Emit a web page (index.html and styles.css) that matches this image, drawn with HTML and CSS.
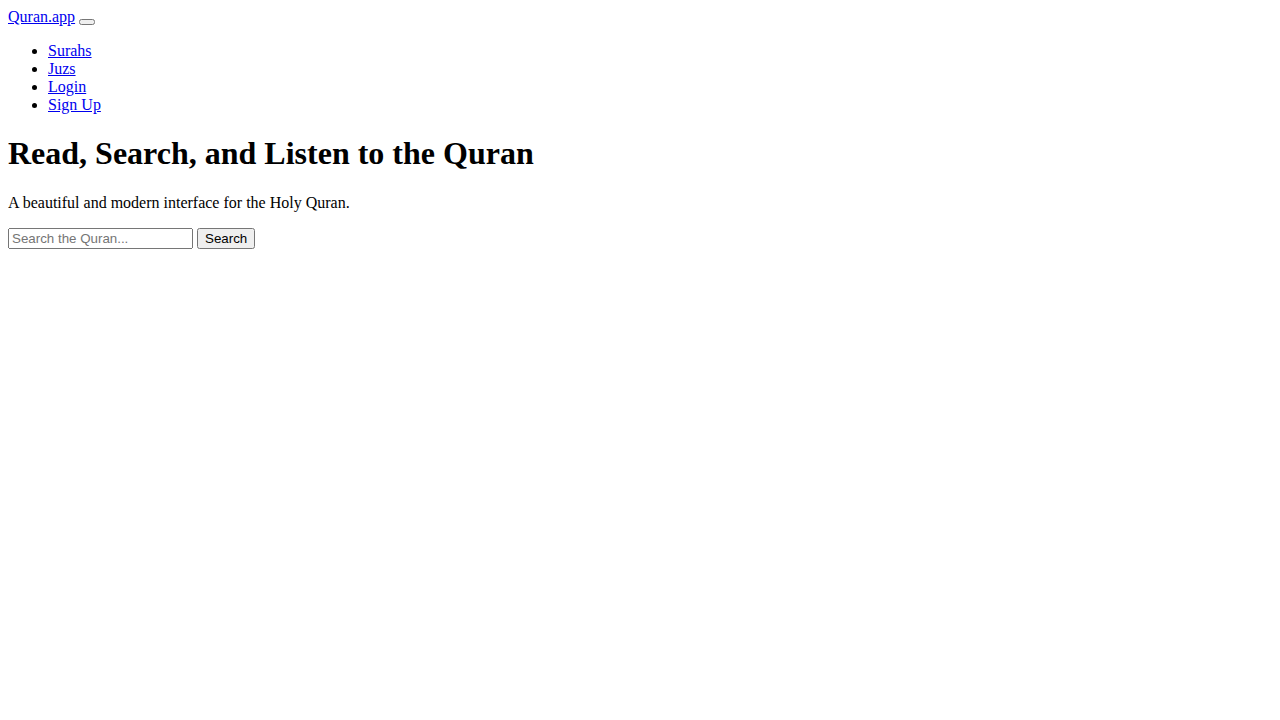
FILE: index.html
```html
<!DOCTYPE html>
<html lang="en">
<head>
<meta charset="utf-8">
<title>Quran.app</title>
<link rel="stylesheet" href="styles.css">
</head>
<body>
<nav class="site-nav">
  <div class="nav-top">
    <a href="#" class="brand">Quran.app</a>
    <button class="nav-toggle" type="button"></button>
  </div>
  <ul class="nav-links">
    <li><a href="#">Surahs</a></li>
    <li><a href="#">Juzs</a></li>
    <li><a href="#">Login</a></li>
    <li><a href="#">Sign Up</a></li>
  </ul>
</nav>
<main class="hero">
  <h1 class="hero-title">Read, Search, and Listen to the Quran</h1>
  <p class="hero-text">A beautiful and modern interface for the Holy Quran.</p>
  <form class="search-form">
    <input class="search-input" type="text" placeholder="Search the Quran...">
    <button class="search-button" type="submit">Search</button>
  </form>
</main>
</body>
</html>
```
FILE: styles.css
```css
body {
  font-family: "Liberation Serif", "Times New Roman", serif;
}
.search-input,
.search-button,
.nav-toggle {
  font-family: "Liberation Sans", Arial, sans-serif;
}
```
